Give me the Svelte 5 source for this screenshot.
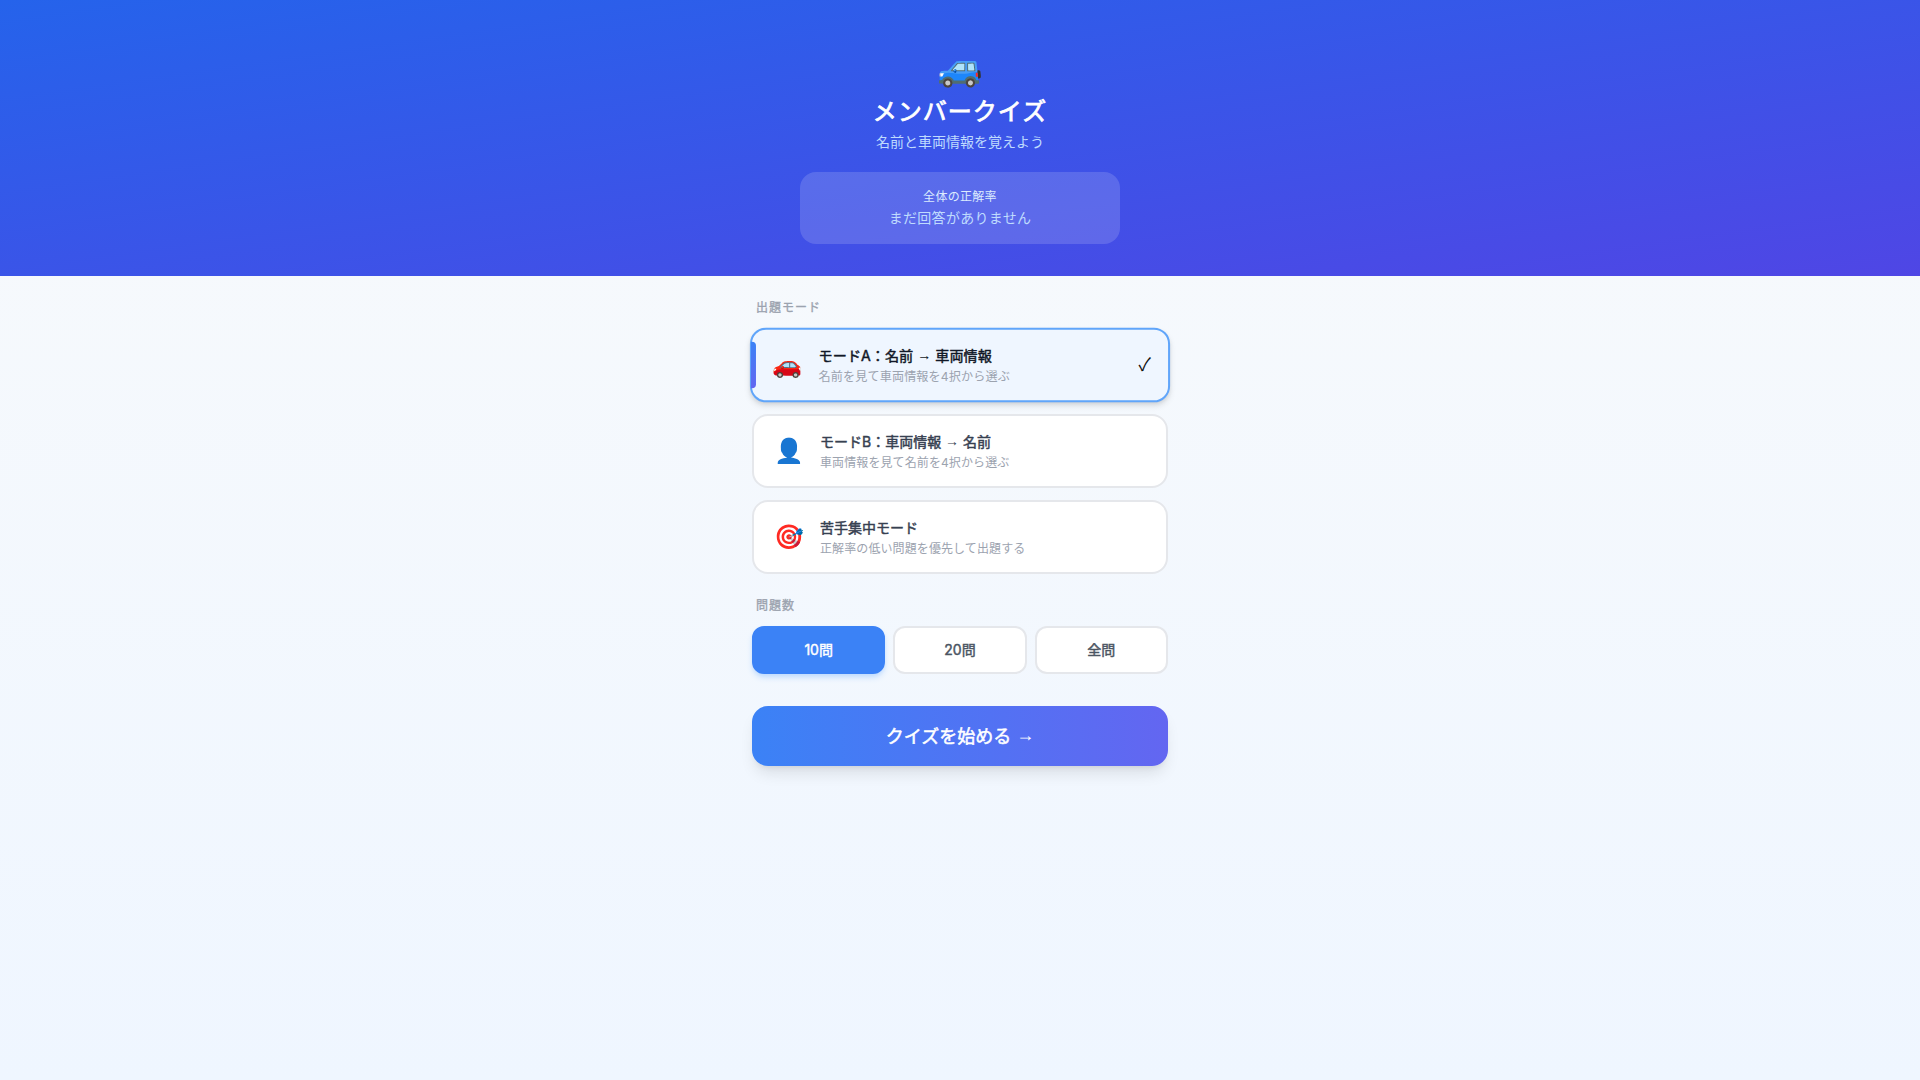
<script>
  const modes = [
    { icon: '🚗', before: 'モードA：名前', after: '車両情報', desc: '名前を見て車両情報を4択から選ぶ', on: true },
    { icon: '👤', before: 'モードB：車両情報', after: '名前', desc: '車両情報を見て名前を4択から選ぶ', on: false },
    { icon: '🎯', before: '苦手集中モード', after: '', desc: '正解率の低い問題を優先して出題する', on: false }
  ];
  const counts = [
    { label: '10問', on: true },
    { label: '20問', on: false },
    { label: '全問', on: false }
  ];
</script>

<div class="page">
  <header class="hero">
    <div class="logo">🚙</div>
    <h1>メンバークイズ</h1>
    <p class="sub">名前と車両情報を覚えよう</p>
    <div class="stat">
      <p class="stat-label">全体の正解率</p>
      <p class="stat-value">まだ回答がありません</p>
    </div>
  </header>

  <main class="content">
    <h2 class="label">出題モード</h2>
    <div class="modes">
      {#each modes as m}
        <button class="mode" class:on={m.on}>
          {#if m.on}<span class="bar"></span>{/if}
          <span class="icon">{m.icon}</span>
          <span class="texts">
            <span class="title">{m.before}{#if m.after}{' '}<span class="sym arrow">→</span>{' '}{m.after}{/if}</span>
            <span class="desc">{m.desc}</span>
          </span>
          {#if m.on}<span class="check sym">✓</span>{/if}
        </button>
      {/each}
    </div>

    <h2 class="label second">問題数</h2>
    <div class="counts">
      {#each counts as c}
        <button class="count" class:on={c.on}>{c.label}</button>
      {/each}
    </div>

    <button class="start">クイズを始める <span class="sym arrow">→</span></button>
  </main>
</div>

<style>
  :global(body) {
    margin: 0;
    font-family: Inter, "Noto Sans CJK JP", sans-serif;
  }
  * { box-sizing: border-box; }
  h1, h2, p { margin: 0; }
  button { font-family: inherit; cursor: pointer; }

  .sym { font-family: "Liberation Sans", "Noto Sans CJK JP", sans-serif; }
  .arrow { line-height: 1; vertical-align: 0.1em; -webkit-text-stroke: 0; }

  .page {
    min-height: 1080px;
    background: linear-gradient(to bottom, #f8fafc, #eff6ff);
  }
  .hero {
    background: linear-gradient(to bottom right, #2563eb, #4f46e5);
    padding: 48px 16px 32px;
    text-align: center;
    color: #fff;
    display: flex;
    flex-direction: column;
    align-items: center;
  }
  .logo { font-size: 37px; line-height: 37px; height: 40px; margin-bottom: 8px; }
  h1 {
    font-size: 24px;
    line-height: 32px;
    font-weight: 400;
    letter-spacing: 1px;
    -webkit-text-stroke: 0.8px;
  }
  .sub { font-size: 14px; line-height: 20px; margin-top: 4px; color: #bfdbfe; }
  .stat {
    width: 320px;
    margin-top: 20px;
    padding: 16px;
    border-radius: 16px;
    background: rgba(255, 255, 255, 0.15);
  }
  .stat-label { font-size: 12px; line-height: 16px; letter-spacing: 0.3px; color: #dbeafe; padding-top: 1px; margin-bottom: -1px; }
  .stat-value { font-size: 14px; line-height: 20px; letter-spacing: 0.3px; margin-top: 4px; color: #bfdbfe; }

  .content {
    width: 448px;
    margin: 0 auto;
    padding: 24px 16px;
  }
  .label {
    font-size: 12px;
    line-height: 16px;
    font-weight: 400;
    letter-spacing: 1px;
    -webkit-text-stroke: 0.35px;
    color: #9ca3af;
    padding: 0 4px;
    margin-bottom: 12px;
  }
  .label.second { margin-top: 24px; }
  .modes { display: flex; flex-direction: column; gap: 12px; }
  .mode {
    position: relative;
    display: flex;
    align-items: center;
    gap: 16px;
    width: 100%;
    height: 74px;
    padding: 16px 20px;
    background: #fff;
    border: 2px solid #e5e7eb;
    border-radius: 16px;
    text-align: left;
  }
  .mode.on {
    background: #eff6ff;
    border-color: #60a5fa;
    transform: scale(1.01);
    box-shadow: 0 4px 6px -1px rgba(0,0,0,.1), 0 2px 4px -2px rgba(0,0,0,.1);
  }
  .bar {
    position: absolute;
    left: -1px;
    top: 12px;
    bottom: 12px;
    width: 5px;
    border-radius: 0 4px 4px 0;
    background: linear-gradient(180deg, #3b82f6, #6366f1);
  }
  .icon { font-size: 24px; line-height: 32px; }
  .texts { display: flex; flex-direction: column; flex: 1; min-width: 0; }
  .title {
    font-size: 14px;
    line-height: 20px;
    font-weight: 400;
    -webkit-text-stroke: 0.45px;
    color: #374151;
  }
  .mode.on .title { color: #111827; }
  .desc { font-size: 12px; line-height: 16px; letter-spacing: 0.1px; margin-top: 3px; color: #9ca3af; }
  .check { font-size: 18px; line-height: 28px; color: #111; margin-right: -3px; }

  .counts { display: grid; grid-template-columns: repeat(3, 1fr); gap: 8px; }
  .count {
    height: 48px;
    padding: 0 0 2px;
    background: #fff;
    border: 2px solid #e5e7eb;
    border-radius: 12px;
    font-size: 14px;
    font-weight: 400;
    -webkit-text-stroke: 0.45px;
    color: #4b5563;
  }
  .count.on {
    background: #3b82f6;
    border-color: #3b82f6;
    color: #fff;
    box-shadow: 0 4px 6px -1px #bfdbfe, 0 2px 4px -2px #bfdbfe;
  }
  .start {
    display: block;
    width: 100%;
    height: 60px;
    margin-top: 32px;
    padding: 0 0 2px;
    border: none;
    border-radius: 16px;
    background: linear-gradient(90deg, #3b82f6, #6366f1);
    color: #fff;
    font-size: 18px;
    font-weight: 400;
    -webkit-text-stroke: 0.5px;
    box-shadow: 0 10px 15px -3px rgba(0,0,0,.1), 0 4px 6px -4px rgba(0,0,0,.1);
  }
</style>
